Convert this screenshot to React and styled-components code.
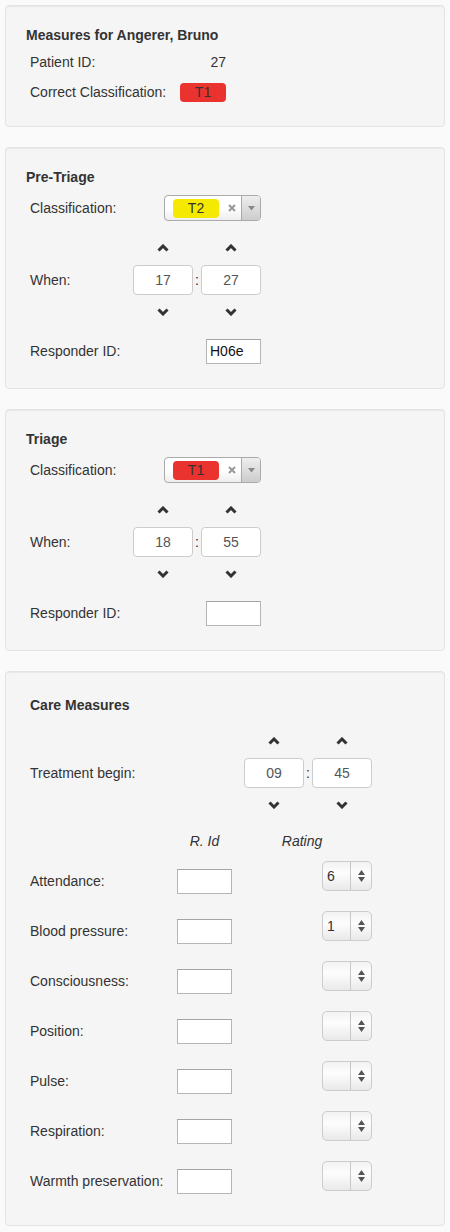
import React from 'react';
import styled, { createGlobalStyle } from 'styled-components';

const GlobalStyle = createGlobalStyle`
  body {
    margin: 0;
    background: #fafafa;
    font-family: "Liberation Sans", Arial, Helvetica, sans-serif;
    font-size: 14px;
    color: #333;
  }
`;

const Page = styled.div`
  padding: 5px;
  width: 440px;
`;

const Well = styled.section`
  background: #f5f5f5;
  border: 1px solid #e3e3e3;
  border-radius: 4px;
  box-shadow: inset 0 1px 1px rgba(0, 0, 0, 0.05);
  padding: 19px 19px ${({ $bottom }) => $bottom || 19}px 19px;
  margin-bottom: 20px;
`;

const Title = styled.h4`
  margin: ${({ $indent, $gap }) =>
    $indent ? '4px 0 9px 5px' : `0 0 ${$gap ?? 6}px 1px`};
  font-size: 14px;
  line-height: 20px;
  font-weight: bold;
  color: #333;
`;

const Row = styled.div`
  display: grid;
  grid-template-columns: ${({ $cols }) => $cols};
  align-items: center;
  padding-left: 5px;
  height: ${({ $h }) => ($h ? `${$h}px` : 'auto')};
  margin: ${({ $m }) => $m || '0'};
`;

const Label = styled.div`
  line-height: 20px;
`;

const Value = styled.div`
  justify-self: end;
  grid-column: ${({ $span }) => $span || 'auto'};
  margin-bottom: ${({ $up }) => ($up ? `${$up}px` : '0')};
`;

const Header = styled.div`
  font-style: italic;
  text-align: center;
`;

const Badge = styled.div`
  width: ${({ $w }) => $w || 46}px;
  height: 19px;
  border-radius: 4px;
  background: ${({ $color }) => $color};
  color: #333;
  text-align: center;
  line-height: 19px;
`;

const Select2 = styled.div`
  width: 97px;
  height: 26px;
  box-sizing: border-box;
  border: 1px solid #aaa;
  border-radius: 4px;
  background: linear-gradient(#fff 0%, #fff 50%, #eee 100%);
  display: flex;
  align-items: center;
  padding-left: 8px;
  overflow: hidden;
`;

const Clear = styled.span`
  display: flex;
  margin-left: 9px;
  width: 8px;
`;

const Arrow = styled.span`
  margin-left: auto;
  width: 18px;
  height: 100%;
  border-left: 1px solid #aaa;
  background: linear-gradient(#eee, #ccc);
  display: flex;
  align-items: center;
  justify-content: center;
`;

const Time = styled.div`
  display: grid;
  grid-template-columns: 60px 8px 60px;
  grid-template-rows: 34px 30px 34px;
  align-items: center;
  justify-items: center;
`;

const TimeInput = styled.div`
  width: 60px;
  height: 30px;
  box-sizing: border-box;
  border: 1px solid #ccc;
  border-radius: 4px;
  background: #fff;
  color: #555;
  text-align: center;
  line-height: 28px;
`;

const Colon = styled.span`
  line-height: 20px;
`;

const TextBox = styled.div`
  width: 55px;
  height: 25px;
  box-sizing: border-box;
  border: 1px solid #b5b5b5;
  border-top-color: #a5a5a5;
  background: #fff;
  color: #111;
  padding-left: 3px;
  line-height: 23px;
`;

const Rating = styled.div`
  width: 50px;
  height: 30px;
  box-sizing: border-box;
  border: 1px solid #ccc;
  border-radius: 5px;
  background: linear-gradient(#f2f2f2, #fdfdfd 40%, #e9e9e9);
  display: grid;
  grid-template-columns: 28px 1fr;
  align-items: center;
`;

const RatingText = styled.span`
  padding-left: 4px;
  color: #333;
  border-right: 1px solid #c8c8c8;
  height: 100%;
  line-height: 28px;
`;

const Spin = styled.span`
  display: flex;
  justify-content: center;
`;

const Chevron = ({ down }) => (
  <svg width="12" height="8" viewBox="0 0 12 8">
    <polyline
      points={down ? '1.5,1.5 6,6 10.5,1.5' : '1.5,6.5 6,2 10.5,6.5'}
      fill="none"
      stroke="#333"
      strokeWidth="3"
    />
  </svg>
);

const Cross = () => (
  <svg width="8" height="8" viewBox="0 0 8 8">
    <path d="M1 1 L7 7 M7 1 L1 7" stroke="#999" strokeWidth="2" />
  </svg>
);

const Caret = () => (
  <svg width="7" height="5" viewBox="0 0 7 5">
    <path d="M0 0 H7 L3.5 4.5 Z" fill="#888" />
  </svg>
);

const Updown = () => (
  <svg width="7" height="12" viewBox="0 0 7 12">
    <path d="M3.5 0 L7 5 H0 Z M0 7 H7 L3.5 12 Z" fill="#555" />
  </svg>
);

const TimePicker = ({ h, m }) => (
  <Time>
    <Chevron />
    <span />
    <Chevron />
    <TimeInput>{h}</TimeInput>
    <Colon>:</Colon>
    <TimeInput>{m}</TimeInput>
    <Chevron down />
    <span />
    <Chevron down />
  </Time>
);

const Classification = ({ tag, color }) => (
  <Select2>
    <Badge $color={color}>{tag}</Badge>
    <Clear>
      <Cross />
    </Clear>
    <Arrow>
      <Caret />
    </Arrow>
  </Select2>
);

const TRIAGE_COLS = '103px 128px';

function TriagePanel({ title, tag, color, h, m, responder }) {
  return (
    <Well $bottom={22}>
      <Title>{title}</Title>
      <Row $cols={TRIAGE_COLS} $h={30}>
        <Label>Classification:</Label>
        <Value>
          <Classification tag={tag} color={color} />
        </Value>
      </Row>
      <Row $cols={TRIAGE_COLS} $m="8px 0 7px">
        <Label>When:</Label>
        <Value>
          <TimePicker h={h} m={m} />
        </Value>
      </Row>
      <Row $cols={TRIAGE_COLS} $h={30}>
        <Label>Responder ID:</Label>
        <Value>
          <TextBox>{responder}</TextBox>
        </Value>
      </Row>
    </Well>
  );
}

const CARE_COLS = '147px 55px 140px';

const measures = [
  { name: 'Attendance:', rating: '6' },
  { name: 'Blood pressure:', rating: '1' },
  { name: 'Consciousness:', rating: '' },
  { name: 'Position:', rating: '' },
  { name: 'Pulse:', rating: '' },
  { name: 'Respiration:', rating: '' },
  { name: 'Warmth preservation:', rating: '' },
];

export default function App() {
  return (
    <Page>
      <GlobalStyle />
      <Well>
        <Title $gap={2}>Measures for Angerer, Bruno</Title>
        <Row $cols="150px 46px" $h={30}>
          <Label>Patient ID:</Label>
          <Value>27</Value>
        </Row>
        <Row $cols="150px 46px" $h={30}>
          <Label>Correct Classification:</Label>
          <Value>
            <Badge $color="#ea322e">T1</Badge>
          </Value>
        </Row>
      </Well>

      <TriagePanel title="Pre-Triage" tag="T2" color="#f5e900" h="17" m="27" responder="H06e" />
      <TriagePanel title="Triage" tag="T1" color="#ea322e" h="18" m="55" responder="" />

      <Well>
        <Title $indent>Care Measures</Title>
        <Row $cols={CARE_COLS}>
          <Label>Treatment begin:</Label>
          <Value $span="2 / 4">
            <TimePicker h="09" m="45" />
          </Value>
        </Row>
        <Row $cols={CARE_COLS} $h={30} $m="4px 0 0">
          <span />
          <Header>R. Id</Header>
          <Header>Rating</Header>
        </Row>
        {measures.map((item) => (
          <Row key={item.name} $cols={CARE_COLS} $h={50}>
            <Label>{item.name}</Label>
            <TextBox />
            <Value $up={10}>
              <Rating>
                <RatingText>{item.rating}</RatingText>
                <Spin>
                  <Updown />
                </Spin>
              </Rating>
            </Value>
          </Row>
        ))}
      </Well>
    </Page>
  );
}
